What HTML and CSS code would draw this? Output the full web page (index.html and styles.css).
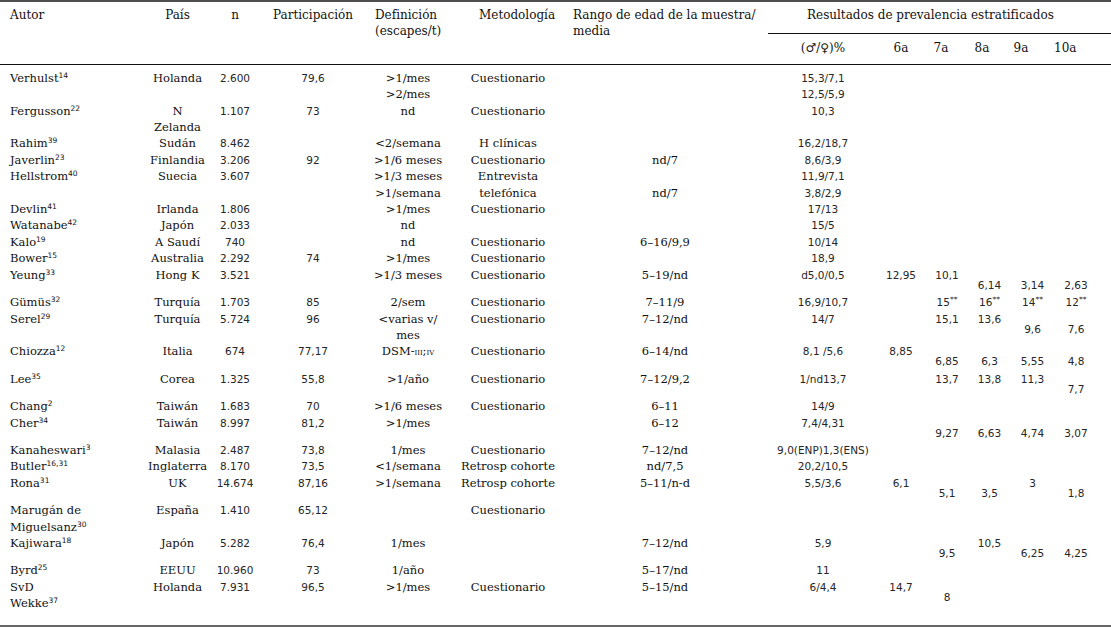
FILE: index.html
```html
<!DOCTYPE html>
<html lang="es">
<head>
<meta charset="utf-8">
<title>Prevalencia de enuresis</title>
<link rel="stylesheet" href="styles.css">
</head>
<body>
<table class="t">
<colgroup>
<col class="w1"><col class="w2"><col class="w3"><col class="w4"><col class="w5"><col class="w6"><col class="w7"><col class="w8"><col class="w9"><col class="w10"><col class="w11"><col class="w12"><col class="w13">
</colgroup>
<thead>
<tr>
<th rowspan="2" class="hb ha">Autor</th>
<th rowspan="2" class="hb hc">País</th>
<th rowspan="2" class="hb hc">n</th>
<th rowspan="2" class="hb hc">Participación</th>
<th rowspan="2" class="hb hdef">Definición<br>(escapes/t)</th>
<th rowspan="2" class="hb hmet">Metodología</th>
<th rowspan="2" class="hb hran">Rango de edad de la muestra/<br>media</th>
<th colspan="6" class="hres"><div class="hres-in">Resultados de prevalencia estratificados</div></th>
</tr>
<tr>
<th class="hs hsex">(♂/♀)%</th>
<th class="hs h6">6a</th>
<th class="hs h7">7a</th>
<th class="hs h8">8a</th>
<th class="hs h9">9a</th>
<th class="hs h10">10a</th>
</tr>
</thead>
<tbody>
<tr class="first"><td>Verhulst<sup>14</sup></td><td>Holanda</td><td>2.600</td><td>79,6</td><td>&gt;1/mes<br>&gt;2/mes</td><td>Cuestionario</td><td></td><td>15,3/7,1<br>12,5/5,9</td><td></td><td></td><td></td><td></td><td></td></tr>
<tr><td>Fergusson<sup>22</sup></td><td>N<br>Zelanda</td><td>1.107</td><td>73</td><td>nd</td><td>Cuestionario</td><td></td><td>10,3</td><td></td><td></td><td></td><td></td><td></td></tr>
<tr><td>Rahim<sup>39</sup></td><td>Sudán</td><td>8.462</td><td></td><td>&lt;2/semana</td><td>H clínicas</td><td></td><td>16,2/18,7</td><td></td><td></td><td></td><td></td><td></td></tr>
<tr><td>Javerlin<sup>23</sup></td><td>Finlandia</td><td>3.206</td><td>92</td><td>&gt;1/6 meses</td><td>Cuestionario</td><td>nd/7</td><td>8,6/3,9</td><td></td><td></td><td></td><td></td><td></td></tr>
<tr><td>Hellstrom<sup>40</sup></td><td>Suecia</td><td>3.607</td><td></td><td>&gt;1/3 meses<br>&gt;1/semana</td><td>Entrevista<br>telefónica</td><td><br>nd/7</td><td>11,9/7,1<br>3,8/2,9</td><td></td><td></td><td></td><td></td><td></td></tr>
<tr><td>Devlin<sup>41</sup></td><td>Irlanda</td><td>1.806</td><td></td><td>&gt;1/mes</td><td>Cuestionario</td><td></td><td>17/13</td><td></td><td></td><td></td><td></td><td></td></tr>
<tr><td>Watanabe<sup>42</sup></td><td>Japón</td><td>2.033</td><td></td><td>nd</td><td></td><td></td><td>15/5</td><td></td><td></td><td></td><td></td><td></td></tr>
<tr><td>Kalo<sup>19</sup></td><td>A Saudí</td><td>740</td><td></td><td>nd</td><td>Cuestionario</td><td>6–16/9,9</td><td>10/14</td><td></td><td></td><td></td><td></td><td></td></tr>
<tr><td>Bower<sup>15</sup></td><td>Australia</td><td>2.292</td><td>74</td><td>&gt;1/mes</td><td>Cuestionario</td><td></td><td>18,9</td><td></td><td></td><td></td><td></td><td></td></tr>
<tr><td>Yeung<sup>33</sup></td><td>Hong K</td><td>3.521</td><td></td><td>&gt;1/3 meses</td><td>Cuestionario</td><td>5–19/nd</td><td>d5,0/0,5</td><td>12,95</td><td>10,1</td><td class="lo">6,14</td><td class="lo">3,14</td><td class="lo">2,63</td></tr>
<tr><td>Gümüs<sup>32</sup></td><td>Turquía</td><td>1.703</td><td>85</td><td>2/sem</td><td>Cuestionario</td><td>7–11/9</td><td>16,9/10,7</td><td></td><td>15<sup>**</sup></td><td>16<sup>**</sup></td><td>14<sup>**</sup></td><td>12<sup>**</sup></td></tr>
<tr><td>Serel<sup>29</sup></td><td>Turquía</td><td>5.724</td><td>96</td><td>&lt;varias v/<br>mes</td><td>Cuestionario</td><td>7–12/nd</td><td>14/7</td><td></td><td>15,1</td><td>13,6</td><td class="lo">9,6</td><td class="lo">7,6</td></tr>
<tr><td>Chiozza<sup>12</sup></td><td>Italia</td><td>674</td><td>77,17</td><td>DSM-<span class="sc">iii;iv</span></td><td>Cuestionario</td><td>6–14/nd</td><td>8,1 /5,6</td><td>8,85</td><td class="lo">6,85</td><td class="lo">6,3</td><td class="lo">5,55</td><td class="lo">4,8</td></tr>
<tr><td>Lee<sup>35</sup></td><td>Corea</td><td>1.325</td><td>55,8</td><td>&gt;1/año</td><td>Cuestionario</td><td>7–12/9,2</td><td>1/nd13,7</td><td></td><td>13,7</td><td>13,8</td><td>11,3</td><td class="lo">7,7</td></tr>
<tr><td>Chang<sup>2</sup></td><td>Taiwán</td><td>1.683</td><td>70</td><td>&gt;1/6 meses</td><td>Cuestionario</td><td>6–11</td><td>14/9</td><td></td><td></td><td></td><td></td><td></td></tr>
<tr><td>Cher<sup>34</sup></td><td>Taiwán</td><td>8.997</td><td>81,2</td><td>&gt;1/mes</td><td></td><td>6–12</td><td>7,4/4,31</td><td></td><td class="lo">9,27</td><td class="lo">6,63</td><td class="lo">4,74</td><td class="lo">3,07</td></tr>
<tr><td>Kanaheswari<sup>3</sup></td><td>Malasia</td><td>2.487</td><td>73,8</td><td>1/mes</td><td>Cuestionario</td><td>7–12/nd</td><td>9,0(ENP)1,3(ENS)</td><td></td><td></td><td></td><td></td><td></td></tr>
<tr><td>Butler<sup>16,31</sup></td><td>Inglaterra</td><td>8.170</td><td>73,5</td><td>&lt;1/semana</td><td>Retrosp cohorte</td><td>nd/7,5</td><td>20,2/10,5</td><td></td><td></td><td></td><td></td><td></td></tr>
<tr><td>Rona<sup>31</sup></td><td>UK</td><td>14.674</td><td>87,16</td><td>&gt;1/semana</td><td>Retrosp cohorte</td><td>5–11/n-d</td><td>5,5/3,6</td><td>6,1</td><td class="lo">5,1</td><td class="lo">3,5</td><td>3</td><td class="lo">1,8</td></tr>
<tr><td>Marugán de<br>Miguelsanz<sup>30</sup></td><td>España</td><td>1.410</td><td>65,12</td><td></td><td>Cuestionario</td><td></td><td></td><td></td><td></td><td></td><td></td><td></td></tr>
<tr><td>Kajiwara<sup>18</sup></td><td>Japón</td><td>5.282</td><td>76,4</td><td>1/mes</td><td></td><td>7–12/nd</td><td>5,9</td><td></td><td class="lo">9,5</td><td>10,5</td><td class="lo">6,25</td><td class="lo">4,25</td></tr>
<tr><td>Byrd<sup>25</sup></td><td>EEUU</td><td>10.960</td><td>73</td><td>1/año</td><td></td><td>5–17/nd</td><td>11</td><td></td><td></td><td></td><td></td><td></td></tr>
<tr class="last"><td>SvD<br>Wekke<sup>37</sup></td><td>Holanda</td><td>7.931</td><td>96,5</td><td>&gt;1/mes</td><td>Cuestionario</td><td>5–15/nd</td><td>6/4,4</td><td>14,7</td><td class="lo">8</td><td></td><td></td><td></td></tr>
</tbody>
</table>
</body>
</html>
```

FILE: styles.css
```css
html, body {
  margin: 0;
  padding: 0;
  background: #ffffff;
}

body {
  width: 1111px;
  height: 627px;
  overflow: hidden;
  color: #111111;
  font-family: "DejaVu Serif", serif;
  font-size: 11.5px;
}

.t {
  width: 1111px;
  table-layout: fixed;
  border-collapse: separate;
  border-spacing: 0;
  border-top: 2px solid #4e4e4e;
  border-bottom: 3px solid #676767;
}

.w1 { width: 140px; }
.w2 { width: 75px; }
.w3 { width: 40px; }
.w4 { width: 116px; }
.w5 { width: 74px; }
.w6 { width: 126px; }
.w7 { width: 188px; }
.w8 { width: 121px; }
.w9 { width: 42px; }
.w10 { width: 46px; }
.w11 { width: 43px; }
.w12 { width: 43px; }
.w13 { width: 57px; }

.t th,
.t td {
  padding: 0;
  vertical-align: top;
  white-space: nowrap;
  line-height: 16.4px;
  font-weight: normal;
}

/* header */
.t th {
  font-size: 12px;
}

.t .hb {
  padding-top: 5px;
  border-bottom: 1px solid #111;
}

.t .ha { text-align: left; padding-left: 10px; }
.t .hc { text-align: center; }
.t .hdef { text-align: left; padding-left: 4px; }
.t .hmet { text-align: left; padding-left: 34px; }
.t .hran { text-align: left; padding-left: 2px; }

.t .hres {
  text-align: left;
  padding-top: 5px;
}

.hres-in {
  margin-left: 9px;
  padding-left: 39px;
  padding-bottom: 10px;
  border-bottom: 1px solid #111;
}

.t .hs {
  padding-top: 6px;
  padding-bottom: 7px;
  border-bottom: 1px solid #111;
  text-align: center;
}

.t .hsex { padding-left: 7px; }
.t .h7 { padding-right: 8px; }
.t .h8 { padding-right: 15px; }
.t .h9 { padding-right: 23px; }
.t .h10 { padding-right: 35px; }

/* body */
.t td {
  text-align: center;
}

.t td:first-child {
  text-align: left;
  padding-left: 10px;
}

.t td:nth-child(3),
.t td:nth-child(4),
.t td:nth-child(n+8) {
  font-family: "DejaVu Sans", sans-serif;
  font-size: 10.5px;
  color: #262626;
}

.t td:nth-child(8) { padding-left: 7px; }
.t td:nth-child(10) { padding-left: 4px; }
.t td:nth-child(13) { padding-right: 13px; }

.t .first td { padding-top: 5px; }
.t .last td { padding-bottom: 13px; }

.t td.lo {
  padding-top: 10px;
  padding-bottom: 1px;
}

sup {
  font-family: "DejaVu Sans", sans-serif;
  font-size: 7.5px;
  line-height: 0;
  vertical-align: 4px;
}

.sc {
  font-variant: small-caps;
  font-size: 10.5px;
}
```
